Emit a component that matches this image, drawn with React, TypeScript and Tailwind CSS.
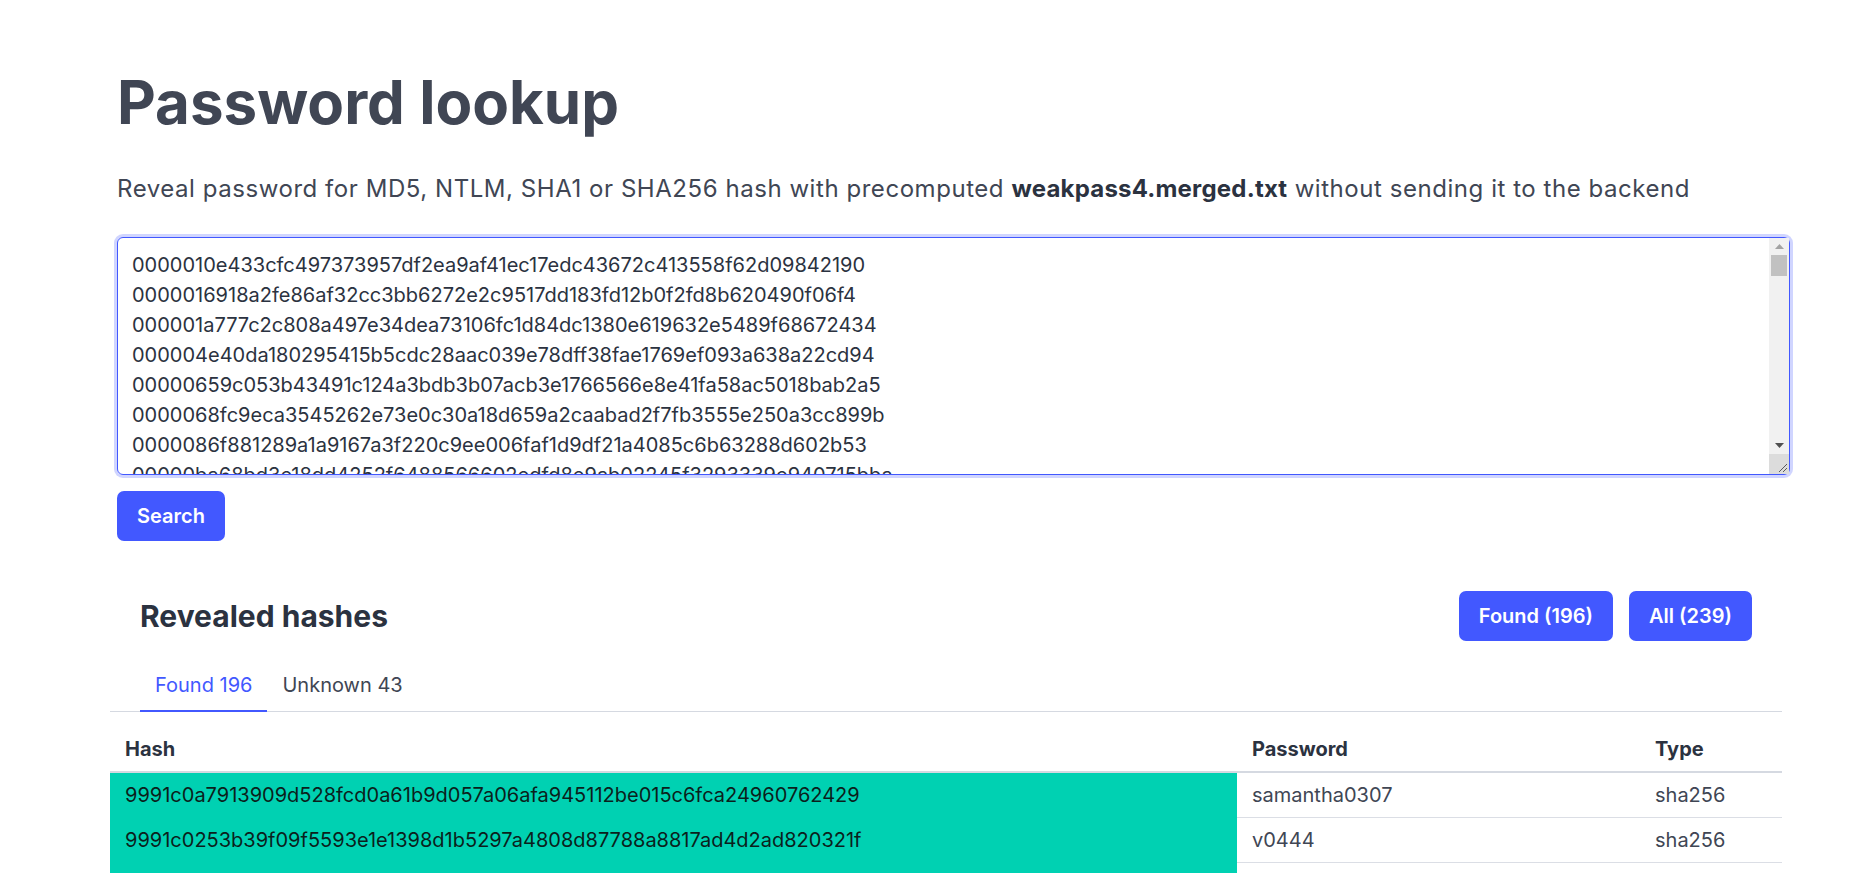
import { useMemo } from "react";

// hashes pasted into the lookup box ----------------------------------------------------------------
const firstHashes = [
  "0000010e433cfc497373957df2ea9af41ec17edc43672c413558f62d09842190",
  "0000016918a2fe86af32cc3bb6272e2c9517dd183fd12b0f2fd8b620490f06f4",
  "000001a777c2c808a497e34dea73106fc1d84dc1380e619632e5489f68672434",
  "000004e40da180295415b5cdc28aac039e78dff38fae1769ef093a638a22cd94",
  "00000659c053b43491c124a3bdb3b07acb3e1766566e8e41fa58ac5018bab2a5",
  "0000068fc9eca3545262e73e0c30a18d659a2caabad2f7fb3555e250a3cc899b",
  "0000086f881289a1a9167a3f220c9ee006faf1d9df21a4085c6b63288d602b53",
  "00000ba68bd3e18dd4252f6488566602edfd8e9ab02245f3293339e940715bba",
];

function makeHashes(count: number) {
  let seed = 1337;
  const hex = "0123456789abcdef";
  const out = [...firstHashes];
  while (out.length < count) {
    let h = "0000";
    for (let i = 0; i < 60; i++) {
      seed = (seed * 1103515245 + 12345) % 2147483648;
      h += hex[Math.floor((seed / 2147483648) * 16)];
    }
    out.push(h);
  }
  return out.join("\n");
}

const rows = [
  { hash: "9991c0a7913909d528fcd0a61b9d057a06afa945112be015c6fca24960762429", password: "samantha0307", type: "sha256" },
  { hash: "9991c0253b39f09f5593e1e1398d1b5297a4808d87788a8817ad4d2ad820321f", password: "v0444", type: "sha256" },
  { hash: "9991c03d7a1e5b4f0c2e98a61b7d3f4e5a6c8b9d0e1f2a3b4c5d6e7f8a9b0c1d", password: "letmein22", type: "sha256" },
];

function BlueButton({ children }: { children: React.ReactNode }) {
  return (
    <button className="h-[50px] rounded-[7px] bg-[#4258ff] px-[20px] text-xl font-semibold text-white">
      {children}
    </button>
  );
}

// classic scrollbar drawn over the textarea edge (headless hides the native one)
function FakeScrollbar() {
  return (
    <div className="pointer-events-none absolute top-[1px] right-[1px] bottom-[1px] flex w-[20px] flex-col bg-[#f1f1f1]">
      <div className="flex h-[17px] items-center justify-center">
        <svg width="9" height="5" viewBox="0 0 9 5">
          <path d="M0 5 L4.5 0 L9 5 Z" fill="#a3a3a3" />
        </svg>
      </div>
      <div className="mx-[2px] h-[21px] bg-[#c1c1c1]" />
      <div className="flex-1" />
      <div className="flex h-[17px] items-center justify-center">
        <svg width="9" height="5" viewBox="0 0 9 5">
          <path d="M0 0 L9 0 L4.5 5 Z" fill="#505050" />
        </svg>
      </div>
      <div className="relative h-[20px] bg-[#dcdcdc]">
        <svg className="absolute right-[1px] bottom-[1px]" width="11" height="11" viewBox="0 0 11 11">
          <path d="M10 2 L2 10 M10 6 L6 10" stroke="#5a5a5a" strokeWidth="1" />
        </svg>
      </div>
    </div>
  );
}

export default function App() {
  const value = useMemo(() => makeHashes(239), []);

  return (
    <div className="h-[873px] overflow-hidden bg-white font-['Inter',sans-serif] text-[#404654]">
      <div className="ml-[117px] w-[1673px] pt-[66px]">
        <h1 className="text-6xl leading-[72px] font-bold text-[#404654]">Password lookup</h1>
        <p className="mt-[35px] text-2xl leading-8 tracking-[0.55px]">
          Reveal password for MD5, NTLM, SHA1 or SHA256 hash with precomputed{" "}
          <strong className="font-bold tracking-[0.2px] text-[#2b3240]">weakpass4.merged.txt</strong> without
          sending it to the backend
        </p>
        <div className="relative mt-[32px]">
          <textarea
            className="block h-[238px] w-full resize-none rounded-[6px] border border-[#4258ff] px-[14px] pt-[12px] pr-[30px] text-xl leading-[30px] text-[#2b3240] outline-none ring-[3px] ring-[#4258ff]/25"
            defaultValue={value}
            spellCheck={false}
          />
          <FakeScrollbar />
        </div>
        <button className="mt-4 h-[50px] rounded-[7px] bg-[#4258ff] px-[20px] text-xl font-semibold text-white">
          Search
        </button>
      </div>

      <div className="mt-[50px] ml-[110px] w-[1672px]">
        <div className="flex items-center justify-between px-[30px]">
          <h2 className="text-3xl leading-10 font-bold text-[#2b3240]">Revealed hashes</h2>
          <div className="flex gap-4">
            <BlueButton>Found (196)</BlueButton>
            <BlueButton>All (239)</BlueButton>
          </div>
        </div>

        <ul className="mt-[19px] flex border-b border-[#d5d9e1] pl-[30px] text-xl leading-[30px]">
          <li className="-mb-px border-b-2 border-[#4258ff] px-[15px] py-[10px] text-[#4258ff]">Found 196</li>
          <li className="px-[15px] py-[10px]">Unknown 43</li>
        </ul>

        <table className="mt-[15px] w-full table-fixed border-collapse text-left text-xl">
          <colgroup>
            <col className="w-[1127px]" />
            <col className="w-[403px]" />
            <col />
          </colgroup>
          <thead>
            <tr className="border-b-2 border-[#d5d9e1] text-[#2b3240]">
              <th className="px-[15px] py-[10px] leading-6 font-bold">Hash</th>
              <th className="px-[15px] py-[10px] leading-6 font-bold">Password</th>
              <th className="px-[15px] py-[10px] leading-6 font-bold">Type</th>
            </tr>
          </thead>
          <tbody>
            {rows.map((r) => (
              <tr key={r.hash}>
                <td className="border-b border-[#00d1b2] bg-[#00d1b2] px-[15px] py-[10px] leading-6 text-[#0b1f1c]">
                  {r.hash}
                </td>
                <td className="border-b border-[#dbdee5] px-[15px] py-[10px] leading-6">{r.password}</td>
                <td className="border-b border-[#dbdee5] px-[15px] py-[10px] leading-6">{r.type}</td>
              </tr>
            ))}
          </tbody>
        </table>
      </div>
    </div>
  );
}
